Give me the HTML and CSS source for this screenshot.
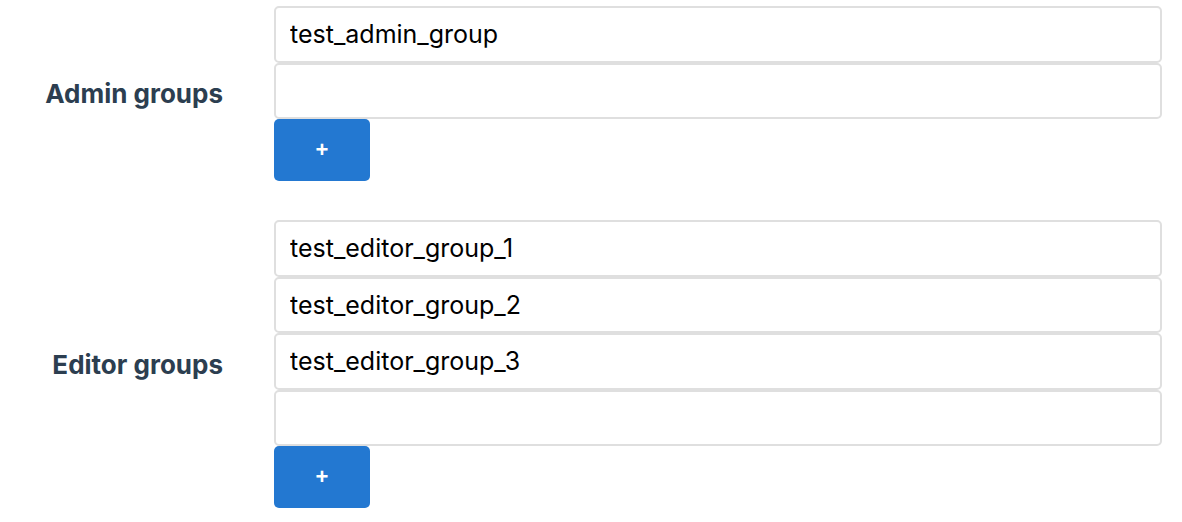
FILE: index.html
```html
<!DOCTYPE html>
<html>
<head>
<meta charset="utf-8">
<link rel="stylesheet" href="styles.css">
</head>
<body>
<div class="form">
  <div class="row">
    <label class="label">Admin groups</label>
    <div class="field">
      <input class="input" type="text" value="test_admin_group">
      <input class="input" type="text" value="">
      <button class="add" type="button">+</button>
    </div>
  </div>
  <div class="row">
    <label class="label">Editor groups</label>
    <div class="field">
      <input class="input" type="text" value="test_editor_group_1">
      <input class="input" type="text" value="test_editor_group_2">
      <input class="input" type="text" value="test_editor_group_3">
      <input class="input" type="text" value="">
      <button class="add" type="button">+</button>
    </div>
  </div>
</div>
</body>
</html>
```
FILE: styles.css
```css
html, body {
  margin: 0;
  padding: 0;
  background: #fff;
}
body {
  font-family: Inter, "Liberation Sans", sans-serif;
}
.form {
  display: flex;
  flex-direction: column;
  gap: 39px;
  padding: 6px 20px 0 0;
}
.row {
  display: grid;
  grid-template-columns: 223px 1fr;
  column-gap: 51px;
  align-items: center;
}
.label {
  text-align: right;
  font-weight: 700;
  font-size: 26px;
  color: #2c3e50;
}
.field {
  display: flex;
  flex-direction: column;
  align-items: flex-start;
}
.input {
  box-sizing: border-box;
  width: 100%;
  height: 56.5px;
  margin: 0;
  border: 2px solid #dfdfdf;
  border-radius: 5px;
  padding: 0 14px;
  font-family: Inter, "Liberation Sans", sans-serif;
  font-size: 25px;
  color: #000;
  background: #fff;
  outline: none;
}
.add {
  width: 96px;
  height: 62px;
  border: none;
  border-radius: 5px;
  background: #2378d1;
  color: #fff;
  font-family: "Liberation Sans", Arial, sans-serif;
  font-weight: 700;
  font-size: 22px;
  padding: 0;
  margin: 0;
}
```
